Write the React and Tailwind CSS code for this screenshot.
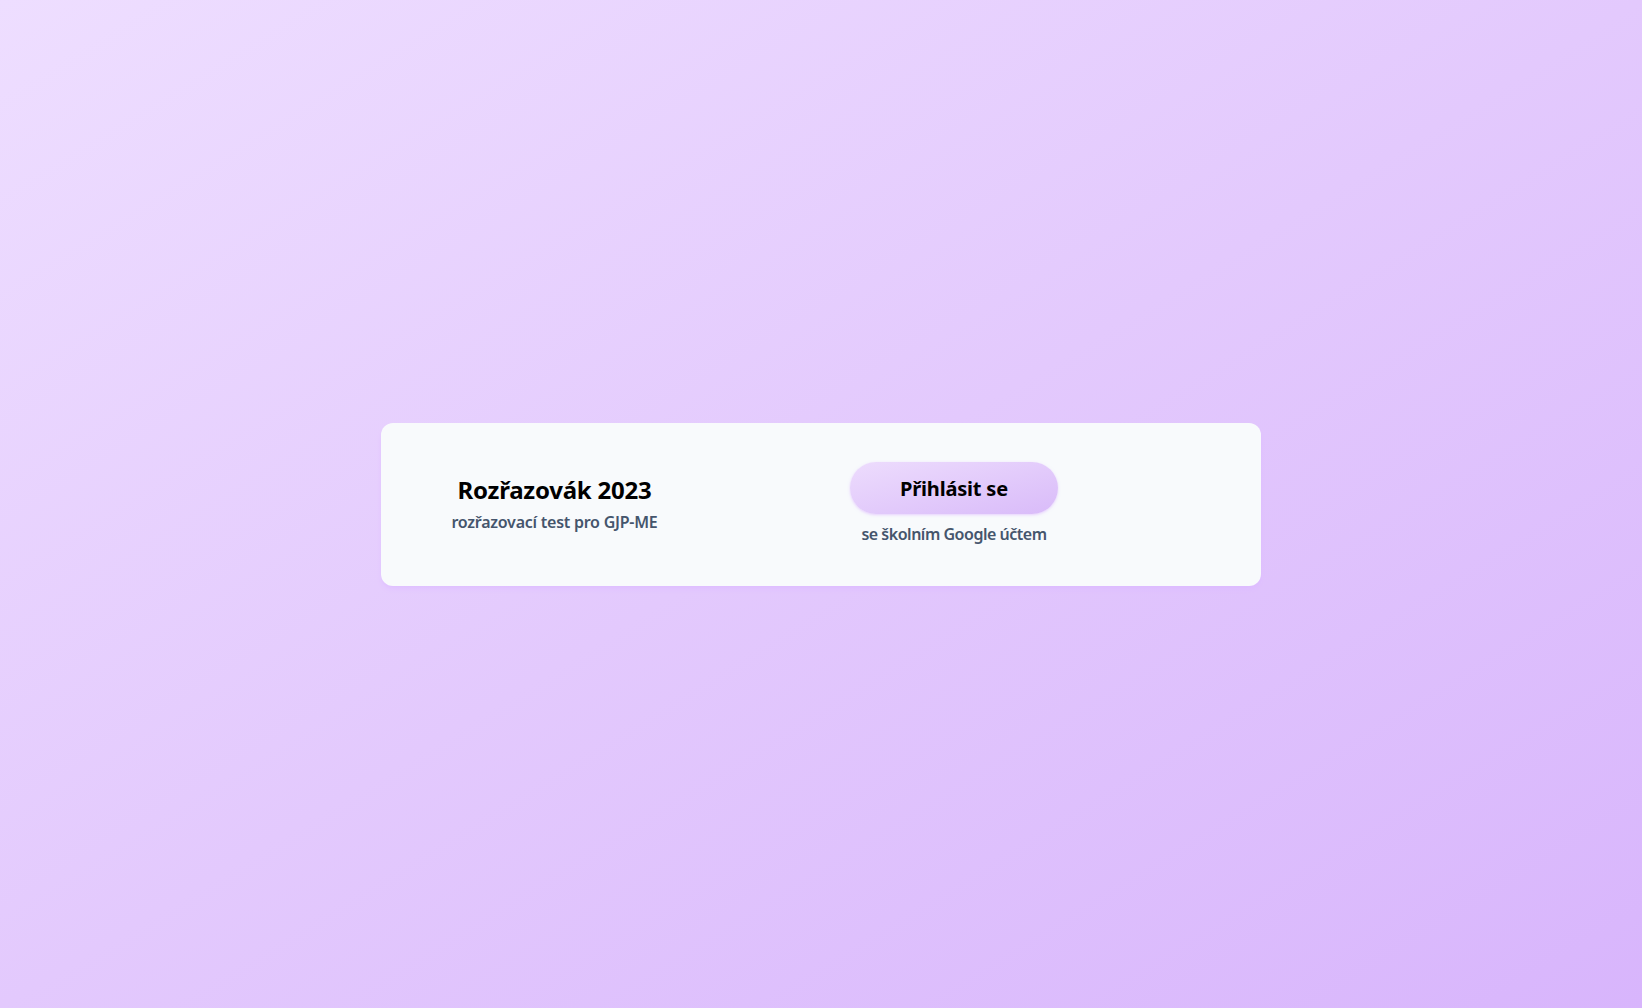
export default function App() {
  return (
    <main
      className="min-h-screen w-full flex items-center justify-center bg-linear-to-br from-[#eedeff] via-[#e3c9fd] to-[#d8b5fc]"
      style={{ fontFamily: '"Noto Sans", "Open Sans", sans-serif' }}
    >
      <div className="w-[880px] h-[163px] rounded-xl bg-slate-50 shadow-md shadow-purple-300/40 flex items-center px-16">
        {/* Title */}
        <div className="w-[219px] text-center">
          <h1 className="text-2xl leading-8 font-bold text-black tracking-[-0.01em]">
            Rozřazovák 2023
          </h1>
          <p className="mt-1 text-base leading-6 font-semibold text-slate-600 tracking-[-0.015em]">
            rozřazovací test pro GJP-ME
          </p>
        </div>

        {/* Login */}
        <div className="ml-[186px] w-52 flex flex-col items-center">
          <button className="w-52 h-[52px] rounded-full bg-linear-to-br from-[#eddcfd] to-[#d9bbf9] text-xl font-bold text-black tracking-[-0.01em] shadow-sm shadow-purple-200">
            <span className="relative top-px">Přihlásit se</span>
          </button>
          <p className="mt-2 text-base leading-6 font-semibold text-slate-600 tracking-[-0.03em]">
            se školním Google účtem
          </p>
        </div>
      </div>
    </main>
  );
}
